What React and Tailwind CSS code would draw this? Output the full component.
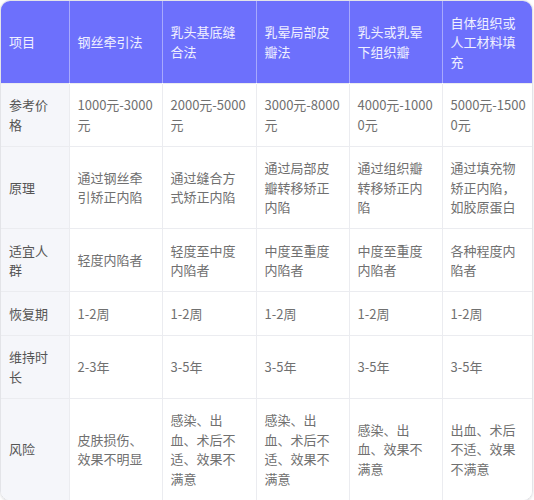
const headers = ["项目", "钢丝牵引法", "乳头基底缝合法", "乳晕局部皮瓣法", "乳头或乳晕下组织瓣", "自体组织或人工材料填充"];

const rows = [
  ["参考价格", "1000元-3000元", "2000元-5000元", "3000元-8000元", "4000元-10000元", "5000元-15000元"],
  ["原理", "通过钢丝牵引矫正内陷", "通过缝合方式矫正内陷", "通过局部皮瓣转移矫正内陷", "通过组织瓣转移矫正内陷", "通过填充物矫正内陷，如胶原蛋白"],
  ["适宜人群", "轻度内陷者", "轻度至中度内陷者", "中度至重度内陷者", "中度至重度内陷者", "各种程度内陷者"],
  ["恢复期", "1-2周", "1-2周", "1-2周", "1-2周", "1-2周"],
  ["维持时长", "2-3年", "3-5年", "3-5年", "3-5年", "3-5年"],
  ["风险", "皮肤损伤、效果不明显", "感染、出血、术后不适、效果不满意", "感染、出血、术后不适、效果不满意", "感染、出血、效果不满意", "出血、术后不适、效果不满意"],
];

const widths = ["w-[68px]", "w-[93px]", "w-[94px]", "w-[93px]", "w-[93px]", "w-[92px]"];

export default function App() {
  return (
    <div className="min-h-[500px] w-[534px] bg-white font-['Noto_Sans_CJK_SC','Noto_Sans',sans-serif] text-[13px] leading-[19.5px]">
      <div className="w-[533px] overflow-hidden rounded-[10px] border border-[#e3e4e8] shadow-sm">
        <table className="w-full table-fixed border-collapse">
          <colgroup>
            {widths.map((w, i) => (
              <col key={i} className={w} />
            ))}
          </colgroup>
          <thead>
            <tr className="bg-[#6d70fc]">
              {headers.map((h, i) => (
                <th
                  key={i}
                  className={`px-2 py-[11.5px] text-left align-middle font-normal text-white/90 ${i > 0 ? "border-l border-white/40" : ""}`}
                >
                  {h}
                </th>
              ))}
            </tr>
          </thead>
          <tbody>
            {rows.map((r, ri) => (
              <tr key={ri} className="border-t border-[#ebecf0]">
                {r.map((c, ci) => (
                  <td
                    key={ci}
                    className={`break-all px-2 py-[11.5px] align-middle ${
                      ci === 0 ? "bg-[#f5f6fa] text-[#555]" : "border-l border-[#ebecf0] bg-white text-[#707070]"
                    }`}
                  >
                    {c}
                  </td>
                ))}
              </tr>
            ))}
          </tbody>
        </table>
      </div>
    </div>
  );
}
